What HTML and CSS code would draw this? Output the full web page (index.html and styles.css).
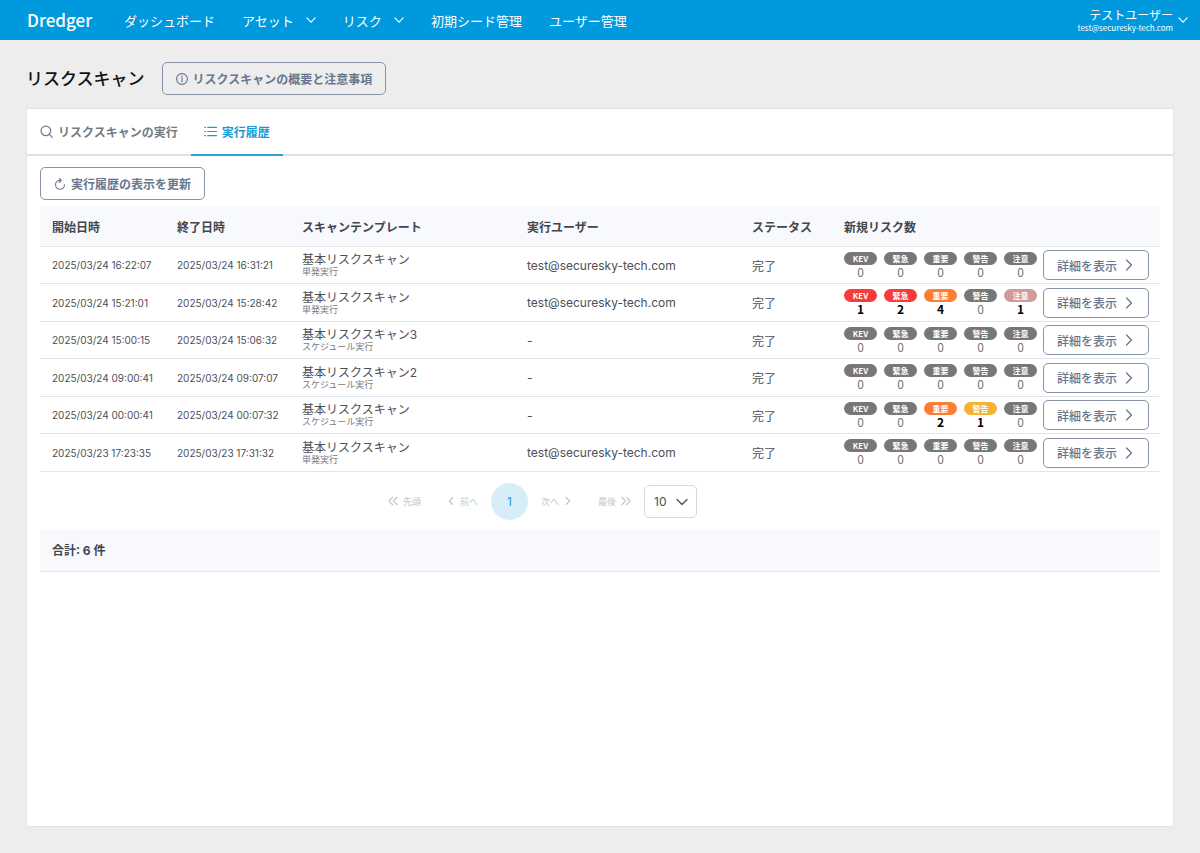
FILE: index.html
```
<!DOCTYPE html>
<html lang="ja">
<head>
    <meta charset="UTF-8">
    <meta name="viewport" content="width=device-width, initial-scale=1">
    <title>Dredger</title>
    <link rel="stylesheet" href="styles.css">
</head>
<body>
    <svg class="symbols" aria-hidden="true">
        <symbol id="down" viewBox="0 0 12 12"><path d="M1 3.5l5 5 5-5"/></symbol>
        <symbol id="right" viewBox="0 0 12 12"><path d="M3.5 1l5 5-5 5"/></symbol>
        <symbol id="left" viewBox="0 0 12 12"><path d="M8.5 1l-5 5 5 5"/></symbol>
        <symbol id="first" viewBox="0 0 12 12"><path d="M5.5 1.5L1 6l4.5 4.5M11 1.5L6.5 6l4.5 4.5"/></symbol>
        <symbol id="last" viewBox="0 0 12 12"><path d="M1 1.5L5.5 6 1 10.5M6.5 1.5L11 6l-4.5 4.5"/></symbol>
    </svg>

    <header class="topbar">
        <a class="logo" href="#">Dredger</a>
        <nav class="menu">
            <a href="#">ダッシュボード</a>
            <a href="#">アセット<svg class="icon-sm"><use href="#down"/></svg></a>
            <a href="#">リスク<svg class="icon-sm"><use href="#down"/></svg></a>
            <a href="#">初期シード管理</a>
            <a href="#">ユーザー管理</a>
        </nav>
        <button class="account" type="button">
            <span class="account-text">
                <span class="account-name">テストユーザー</span>
                <span class="account-mail">test@securesky-tech.com</span>
            </span>
            <svg class="icon-sm"><use href="#down"/></svg>
        </button>
    </header>

    <main class="page">
        <div class="page-head">
            <h1>リスクスキャン</h1>
            <button class="btn" type="button">
                <svg class="icon" viewBox="0 0 14 14"><circle cx="7" cy="7" r="6.3"/><path d="M7 6.2v4M7 3.6v1.2"/></svg>
                リスクスキャンの概要と注意事項
            </button>
        </div>

        <section class="panel">
            <div class="tabs" role="tablist">
                <button class="tab" type="button" role="tab" aria-selected="false">
                    <svg class="icon" viewBox="0 0 14 14"><circle cx="6.3" cy="6.3" r="5.2"/><path d="M10.1 10.1l3.2 3.2"/></svg>
                    リスクスキャンの実行
                </button>
                <button class="tab active" type="button" role="tab" aria-selected="true">
                    <svg class="icon" viewBox="0 0 14 14"><path d="M4 2.5h9.500M4 7h9.500M4 11.500h9.500M.8 2.500h.8M.8 7h.8M.8 11.500h.8"/></svg>
                    実行履歴
                </button>
            </div>

            <div class="panel-body">
                <button class="btn" type="button">
                    <svg class="icon" viewBox="0 0 14 14"><path d="M8 2.800H7A5.200 5.200 0 1 0 12.200 8M6.200.6L8.500 2.800 6.200 5.100"/></svg>
                    実行履歴の表示を更新
                </button>

                <table class="history">
                    <colgroup>
                        <col class="col-date"><col class="col-date"><col class="col-template"><col>
                        <col class="col-status"><col class="col-risk"><col class="col-action">
                    </colgroup>
                    <thead>
                        <tr>
                            <th>開始日時</th>
                            <th>終了日時</th>
                            <th>スキャンテンプレート</th>
                            <th>実行ユーザー</th>
                            <th>ステータス</th>
                            <th colspan="2">新規リスク数</th>
                        </tr>
                    </thead>
                    <tbody id="rows"></tbody>
                </table>

                <div class="pager">
                    <button class="page-btn" type="button" disabled><svg class="icon-sm"><use href="#first"/></svg>先頭</button>
                    <button class="page-btn" type="button" disabled><svg class="icon-xs"><use href="#left"/></svg>前へ</button>
                    <button class="page-num" type="button">1</button>
                    <button class="page-btn" type="button" disabled>次へ<svg class="icon-xs"><use href="#right"/></svg></button>
                    <button class="page-btn" type="button" disabled>最後<svg class="icon-sm"><use href="#last"/></svg></button>
                    <div class="page-size">
                        <select aria-label="表示件数">
                            <option>10</option>
                            <option>20</option>
                            <option>50</option>
                        </select>
                        <svg class="icon"><use href="#down"/></svg>
                    </div>
                </div>

                <div class="total">合計: 6 件</div>
            </div>
        </section>
    </main>

    <script src="script.js"></script>
</body>
</html>
```

FILE: styles.css
```
* {
    box-sizing: border-box;
}

body {
    margin: 0;
    min-height: 100vh;
    display: flex;
    flex-direction: column;
    background: #ededed;
    color: #4b5057;
    font-family: Inter, "Noto Sans CJK JP", sans-serif;
    font-size: 12px;
}

button,
select {
    font: inherit;
    color: inherit;
    cursor: pointer;
}

svg {
    fill: none;
    stroke: currentColor;
    stroke-linecap: round;
    stroke-linejoin: round;
    flex: none;
}

.symbols {
    display: none;
}

.icon {
    width: 12px;
    height: 12px;
    stroke-width: 1.3;
}

.icon-sm {
    width: 10px;
    height: 10px;
    stroke-width: 1.4;
}

.icon-xs {
    width: 8px;
    height: 8px;
    stroke-width: 2;
}

/* header */
.topbar {
    height: 40px;
    padding: 0 12px 0 27px;
    display: flex;
    align-items: center;
    background: #0099dd;
    color: #fff;
    font-family: "Noto Sans CJK JP", sans-serif;
}

.topbar a {
    color: inherit;
    text-decoration: none;
}

.logo {
    font-size: 17px;
    font-weight: 500;
    line-height: 38px;
    margin-right: 32px;
}

.menu {
    display: flex;
    gap: 27px;
    font-size: 13px;
}

.menu a {
    display: flex;
    align-items: center;
    gap: 12px;
}

.account {
    margin-left: auto;
    padding: 0;
    border: none;
    background: none;
    display: flex;
    align-items: center;
    gap: 5px;
}

.account-text {
    display: flex;
    flex-direction: column;
    text-align: right;
}

.account-name {
    line-height: 14px;
}

.account-mail {
    font-size: 8px;
    line-height: 11px;
}

/* page */
.page {
    flex: 1;
    display: flex;
    flex-direction: column;
    padding: 22px 26px 26px;
}

.page-head {
    display: flex;
    align-items: center;
    gap: 17px;
    margin-bottom: 13px;
}

h1 {
    margin: 0;
    padding-top: 2px;
    color: #111;
    font-size: 17px;
    font-weight: 500;
    line-height: 31px;
}

.btn {
    height: 33px;
    padding: 0 13px;
    display: inline-flex;
    align-items: center;
    gap: 5px;
    border: 1px solid #8794a8;
    border-radius: 5px;
    background: transparent;
    color: #68778d;
    font-weight: 700;
    white-space: nowrap;
}

.panel {
    flex: 1;
    background: #fff;
    border: 1px solid #e2e4e6;
}

.tabs {
    display: flex;
    border-bottom: 2px solid #dee2e6;
}

.tab {
    height: 47px;
    margin-bottom: -2px;
    padding: 0 13px;
    display: flex;
    align-items: center;
    gap: 5px;
    border: none;
    border-bottom: 2px solid transparent;
    background: none;
    color: #757b82;
    font-weight: 700;
}

.tab .icon {
    width: 13px;
    height: 13px;
}

.tab.active {
    color: #1a9bd3;
    border-color: #2ba1d6;
}

.panel-body {
    padding: 11px 13px;
}

.panel-body > .btn {
    display: flex;
}

/* scan history */
.history {
    width: 100%;
    margin-top: 6px;
    border-collapse: separate;
    border-spacing: 0;
    table-layout: fixed;
}

.col-date {
    width: 125px;
}

.col-template {
    width: 225px;
}

.col-status {
    width: 92px;
}

.col-risk {
    width: 211px;
}

.col-action {
    width: 117px;
}

.history th {
    height: 41px;
    padding: 0 12px;
    background: #f8f9fc;
    border-bottom: 1px solid #e5e7eb;
    color: #42464c;
    font-weight: 700;
    text-align: left;
}

.history td {
    height: 37px;
    padding: 0 0 0 12px;
    border-bottom: 1px solid #e2e5e9;
    white-space: nowrap;
}

.history tr:nth-child(even) td {
    height: 38px;
}

.history .date {
    font-size: 10px;
}

.history .action {
    padding: 0;
}

.template {
    display: block;
    line-height: 14px;
}

.kind {
    display: block;
    color: #777b80;
    font-size: 9px;
    line-height: 10px;
}

.risks {
    display: flex;
    gap: 7px;
    font-family: "Noto Sans CJK JP", sans-serif;
}

.risk {
    width: 33px;
    color: #777;
    text-align: center;
    line-height: 14px;
}

.badge {
    display: block;
    border-radius: 7px;
    background: #777;
    color: #fff;
    font-size: 8px;
    font-weight: 700;
    line-height: 13px;
}

.risk.hit {
    color: #000;
    font-weight: 700;
}

.hit .kev,
.hit .urgent {
    background: #f73a3a;
}

.hit .important {
    background: #fb7d36;
}

.hit .warning {
    background: #f5b233;
}

.hit .notice {
    background: #d09a9a;
}

.btn.detail {
    display: flex;
    height: 30px;
    gap: 6px;
    font-family: "Noto Sans CJK JP", sans-serif;
    font-weight: 500;
}

/* paginator */
.pager {
    height: 58px;
    padding-right: 128px;
    display: flex;
    align-items: center;
    justify-content: center;
}

.page-btn {
    padding: 0 13px;
    display: flex;
    align-items: center;
    gap: 5px;
    border: none;
    background: none;
    color: #c4c7ca;
    font-size: 9px;
}

.page-num {
    width: 37px;
    height: 37px;
    padding: 0;
    border: none;
    border-radius: 50%;
    background: #d7eef9;
    color: #1a9bd3;
}

.page-size {
    position: relative;
}

.page-size select {
    width: 53px;
    height: 33px;
    padding: 0 9px;
    border: 1px solid #d5dade;
    border-radius: 5px;
    background: #fff;
    appearance: none;
}

.page-size .icon {
    position: absolute;
    right: 9px;
    top: 11px;
    pointer-events: none;
}

.total {
    padding: 1px 12px 0;
    background: #f8f9fc;
    border-bottom: 1px solid #e2e5e9;
    color: #42464c;
    font-weight: 700;
    line-height: 40px;
}
```

FILE: script.js
```
const mail = 'test@securesky-tech.com';

const levels = [
    ['kev', 'KEV'],
    ['urgent', '緊急'],
    ['important', '重要'],
    ['warning', '警告'],
    ['notice', '注意']
];

const scans = [
    ['2025/03/24 16:22:07', '2025/03/24 16:31:21', '基本リスクスキャン', '単発実行', mail, [0, 0, 0, 0, 0]],
    ['2025/03/24 15:21:01', '2025/03/24 15:28:42', '基本リスクスキャン', '単発実行', mail, [1, 2, 4, 0, 1]],
    ['2025/03/24 15:00:15', '2025/03/24 15:06:32', '基本リスクスキャン3', 'スケジュール実行', '-', [0, 0, 0, 0, 0]],
    ['2025/03/24 09:00:41', '2025/03/24 09:07:07', '基本リスクスキャン2', 'スケジュール実行', '-', [0, 0, 0, 0, 0]],
    ['2025/03/24 00:00:41', '2025/03/24 00:07:32', '基本リスクスキャン', 'スケジュール実行', '-', [0, 0, 2, 1, 0]],
    ['2025/03/23 17:23:35', '2025/03/23 17:31:32', '基本リスクスキャン', '単発実行', mail, [0, 0, 0, 0, 0]]
];

function riskCell(counts) {
    return levels.map(([cls, label], i) => `
        <div class="risk${counts[i] ? ' hit' : ''}"><span class="badge ${cls}">${label}</span>${counts[i]}</div>`
    ).join('');
}

document.getElementById('rows').innerHTML = scans.map(([start, end, template, kind, user, counts]) => `
    <tr>
        <td class="date">${start}</td>
        <td class="date">${end}</td>
        <td><span class="template">${template}</span><span class="kind">${kind}</span></td>
        <td>${user}</td>
        <td>完了</td>
        <td><div class="risks">${riskCell(counts)}</div></td>
        <td class="action"><button class="btn detail" type="button">詳細を表示<svg class="icon"><use href="#right"/></svg></button></td>
    </tr>`
).join('');
```
